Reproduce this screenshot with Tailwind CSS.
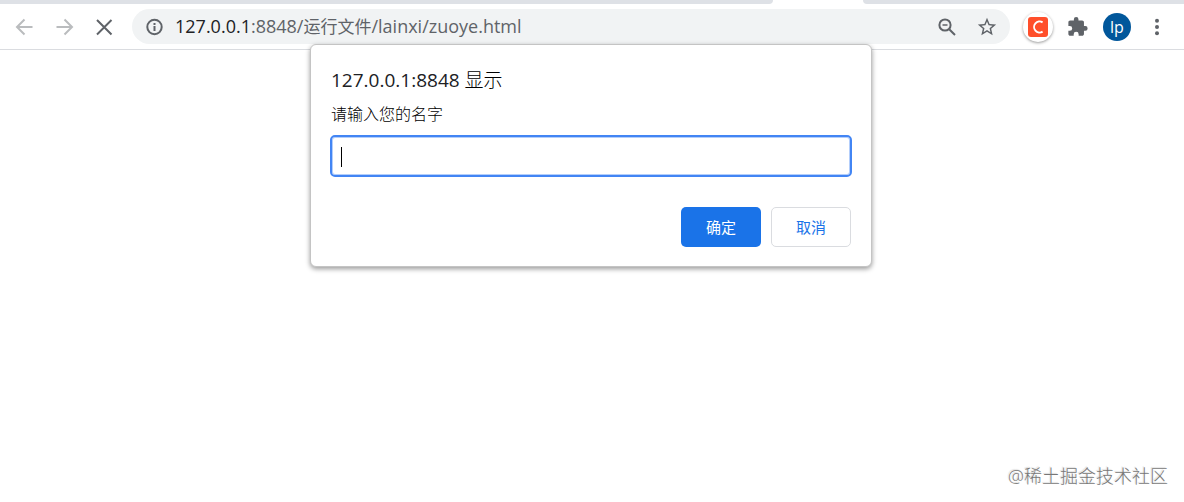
<!DOCTYPE html>
<html lang="zh-CN">
<head>
<meta charset="utf-8">
<title>zuoye.html</title>
<script src="https://cdn.jsdelivr.net/npm/@tailwindcss/browser@4"></script>
</head>
<body class="relative flex min-h-screen flex-col bg-white font-['Open_Sans','Noto_Sans_CJK_SC',sans-serif] text-[#202124]">
  <div class="flex h-1 gap-[90px]">
    <div class="grow-[773] basis-0 rounded-br-[10px] bg-[#dee1e6]"></div>
    <div class="grow-[321] basis-0 rounded-bl-[10px] bg-[#dee1e6]"></div>
  </div>
  <header class="flex h-[46px] items-center border-b border-[#dadce0] pl-3 pr-[15px]">
    <nav class="flex shrink-0 gap-4 text-[#babcbe]">
      <button type="button" aria-label="后退" class="flex size-6 items-center justify-center">
        <svg class="size-6" viewBox="0 0 24 24" fill="none" stroke="currentColor" stroke-width="2"><path d="M20.500 12H5.500M12.500 4.500L5 12l7.500 7.500"/></svg>
      </button>
      <button type="button" aria-label="前进" class="flex size-6 items-center justify-center">
        <svg class="size-6" viewBox="0 0 24 24" fill="none" stroke="currentColor" stroke-width="2"><path d="M4.500 12H19.500M12.500 4.500L20 12l-7.500 7.500"/></svg>
      </button>
      <button type="button" aria-label="停止" class="flex size-6 items-center justify-center text-[#5f6368]">
        <svg class="size-6" viewBox="0 0 24 24" fill="none" stroke="currentColor" stroke-width="2"><path d="M5 5l14.500 14.500M19.500 5L5 19.500"/></svg>
      </button>
    </nav>
    <div class="ml-4 flex h-[35px] min-w-0 grow items-center rounded-full bg-[#f1f3f4] px-3 text-[#5f6368]">
      <button type="button" aria-label="网站信息" class="shrink-0">
        <svg class="size-5" viewBox="0 0 20 20" fill="none" stroke="currentColor" stroke-width="2"><circle cx="10.500" cy="10" r="7.200"/><path d="M10.500 9v5M10.500 6v2"/></svg>
      </button>
      <div role="textbox" aria-label="地址栏" class="ml-[11px] grow truncate text-[18px] leading-6"><span class="text-[#202124]">127.0.0.1</span>:8848/<span class="text-[17px]">运行文件</span>/lainxi/zuoye.html</div>
      <button type="button" aria-label="缩放" class="shrink-0">
        <svg class="size-5" viewBox="0 0 20 20" fill="none" stroke="currentColor" stroke-width="2"><circle cx="8" cy="8" r="5.600"/><path d="M12.200 12.200l5.800 5.800"/><path d="M5.500 8h5" stroke-width="1.500"/></svg>
      </button>
      <button type="button" aria-label="添加书签" class="ml-[19px] shrink-0">
        <svg class="size-[22px]" viewBox="0 0 24 24" fill="currentColor"><path d="M22 9.240l-7.190-.62L12 2 9.190 8.630 2 9.240l5.460 4.730L5.820 21 12 17.270 18.180 21l-1.630-7.030L22 9.240zM12 15.400l-3.760 2.270 1-4.280-3.320-2.880 4.380-.38L12 6.100l1.710 4.040 4.380.38-3.320 2.880 1 4.280L12 15.400z"/></svg>
      </button>
    </div>
    <div class="ml-[13px] flex shrink-0 items-center">
      <button type="button" aria-label="扩展 C" class="flex size-[30px] items-center justify-center rounded-full bg-white shadow-[0_1px_3px_#0006]">
        <svg class="size-5" viewBox="0 0 20 20"><rect width="20" height="20" rx="3" fill="#ff4f2b"/><path d="M14.600 5.400a5.500 5.500 0 1 0 0 9.200" fill="none" stroke="#fff" stroke-width="1.900"/></svg>
      </button>
      <button type="button" aria-label="扩展程序" class="ml-[14px] text-[#5f6368]">
        <svg class="size-[22px]" viewBox="0 0 24 24" fill="currentColor"><path d="M20 11h-1.500V7c0-1.100-.9-2-2-2h-4V3.500a2.500 2.500 0 0 0-5 0V5H3.500c-1.100 0-1.990.9-1.990 2v3.800H3a2.700 2.700 0 0 1 0 5.400H1.500V19.500c0 1.100.9 2 2 2h3.800V20a2.700 2.700 0 0 1 5.400 0v1.500h3.800c1.100 0 2-.9 2-2V16H20a2.500 2.500 0 0 0 0-5z"/></svg>
      </button>
      <button type="button" aria-label="个人资料" class="ml-[14px] flex size-7 items-center justify-center rounded-full bg-[#01579b] text-base leading-5 text-white">lp</button>
      <button type="button" aria-label="更多" class="ml-[14px] text-[#5f6368]">
        <svg class="size-6" viewBox="0 0 24 24" fill="currentColor"><circle cx="12" cy="5.700" r="2"/><circle cx="12" cy="12" r="2"/><circle cx="12" cy="18.300" r="2"/></svg>
      </button>
    </div>
  </header>
  <main class="flex grow items-end justify-end px-4 pb-3">
    <p class="text-[18px] leading-7 font-light text-[#777] [text-shadow:-1px_-1px_1px_#ddd]">@稀土掘金技术社区</p>
  </main>
  <div class="absolute inset-x-0 top-11 flex justify-center pr-0.5">
    <form role="dialog" aria-labelledby="dialog-title" class="w-[562px] rounded-md border border-[#c4c4c4] bg-white px-5 py-[19px] shadow-[0_2px_5px_#0006]">
      <h1 id="dialog-title" class="text-[19px] leading-8">127.0.0.1:8848 <span class="font-light text-black">显示</span></h1>
      <label for="name" class="mt-1 block text-base leading-7 font-light text-black">请输入您的名字</label>
      <div class="relative mt-[7px] -mx-px">
        <input id="name" type="text" autocomplete="off" class="block h-[42px] w-full rounded-[5px] border-2 border-[#4285f4] px-2 text-base caret-transparent ring-1 ring-[#4285f4]/40 ring-inset outline-none">
        <span class="absolute top-3 left-[11px] h-5 w-px bg-black"></span>
      </div>
      <div class="mt-[30px] flex justify-end gap-[10px] text-[15px] leading-5">
        <button type="submit" class="h-10 w-20 rounded-[5px] bg-[#1a73e8] text-white">确定</button>
        <button type="button" class="h-10 w-20 rounded-[5px] border border-[#dadce0] text-[#1a73e8]">取消</button>
      </div>
    </form>
  </div>
</body>
</html>
